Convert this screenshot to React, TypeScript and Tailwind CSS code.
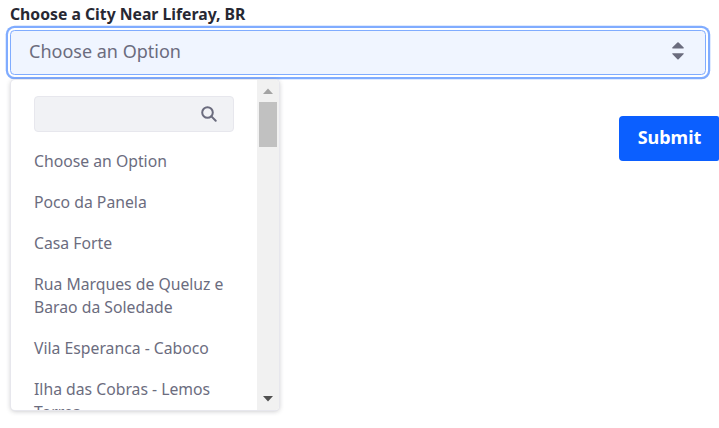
import React from "react";

const options = [
  "Choose an Option",
  "Poco da Panela",
  "Casa Forte",
  "Rua Marques de Queluz e Barao da Soledade",
  "Vila Esperanca - Caboco",
  "Ilha das Cobras - Lemos Torres",
];

export default function App() {
  return (
    <div className="h-[428px] w-[719px] overflow-hidden bg-white font-['Noto_Sans',sans-serif] text-[#6b6c7e]">
      <div className="px-2.5 pt-[2px]">
        <label className="block h-[25px] text-[15.75px] leading-[24px] font-bold whitespace-nowrap text-[#272833]">
          Choose a City Near Liferay, BR
        </label>
      </div>
      <div className="mt-[3px] ml-2.5 flex h-[45px] w-[696px] items-center justify-between rounded-[4.5px] border border-[#80acff] bg-[#f0f5ff] pr-[21px] pl-[18px] shadow-[0_0_0_2px_#fff,0_0_0_4.250px_#80acff]">
        <span className="-mt-0.5 text-[18px] leading-[27px]">Choose an Option</span>
        <svg className="-mt-[3px]" width="13" height="18" viewBox="0 0 13 18" fill="#6b6c7e">
          <path d="M1.700 6.500h10.600c.5 0 .7-.5.4-.9L7.600.5a.9.9 0 0 0-1.200 0L1.300 5.600c-.3.400-.1.900.4.900zM1.700 11.200h10.600c.5 0 .7.5.4.900l-5.100 5.100a.9.9 0 0 1-1.200 0l-5.100-5.100c-.3-.4-.1-.9.4-.9z" />
        </svg>
      </div>
      <div className="flex items-start justify-between">
        <div className="mt-[5px] ml-[11px] flex h-[330px] w-[268px] overflow-hidden rounded-[4px] bg-white shadow-[0_0_0_1px_#e7e7ed,0_1px_5px_rgba(39,40,51,0.3)]">
          <div className="w-[246px] pt-4 pl-[23px]">
            <div className="flex h-9 w-[200px] items-center justify-end rounded-[4px] border border-[#e7e7ed] bg-[#f1f2f5] pr-4">
              <svg width="16" height="16" viewBox="0 0 16 16" fill="none" stroke="#6b6c7e" strokeWidth="2">
                <circle cx="6.500" cy="6.500" r="5.300" />
                <path d="m10.400 10.400 4.300 4.300" strokeLinecap="round" />
              </svg>
            </div>
            <ul className="pt-[18px] text-[15.75px] leading-[23px]">
              {options.map((option) => (
                <li key={option} className="w-[200px] pb-[18px]">{option}</li>
              ))}
            </ul>
          </div>
          <div className="flex w-[22px] flex-col items-center bg-[#f1f1f1]">
            <svg width="22" height="22" viewBox="0 0 22 22" fill="#a3a3a3"><path d="M6 14 11 8.500 16 14z" /></svg>
            <div className="h-[45px] w-[18px] bg-[#c1c1c1]" />
            <div className="flex-1" />
            <svg width="22" height="22" viewBox="0 0 22 22" fill="#505050"><path d="M6 8 11 13.500 16 8z" /></svg>
          </div>
        </div>
        <button className="mt-[41px] h-[45px] w-[100px] shrink-0 rounded-l-[4px] rounded-r-[2px] bg-[#0b5fff] pb-0.5 pl-px text-[18px] leading-[27px] font-bold text-white">
          Submit
        </button>
      </div>
    </div>
  );
}
